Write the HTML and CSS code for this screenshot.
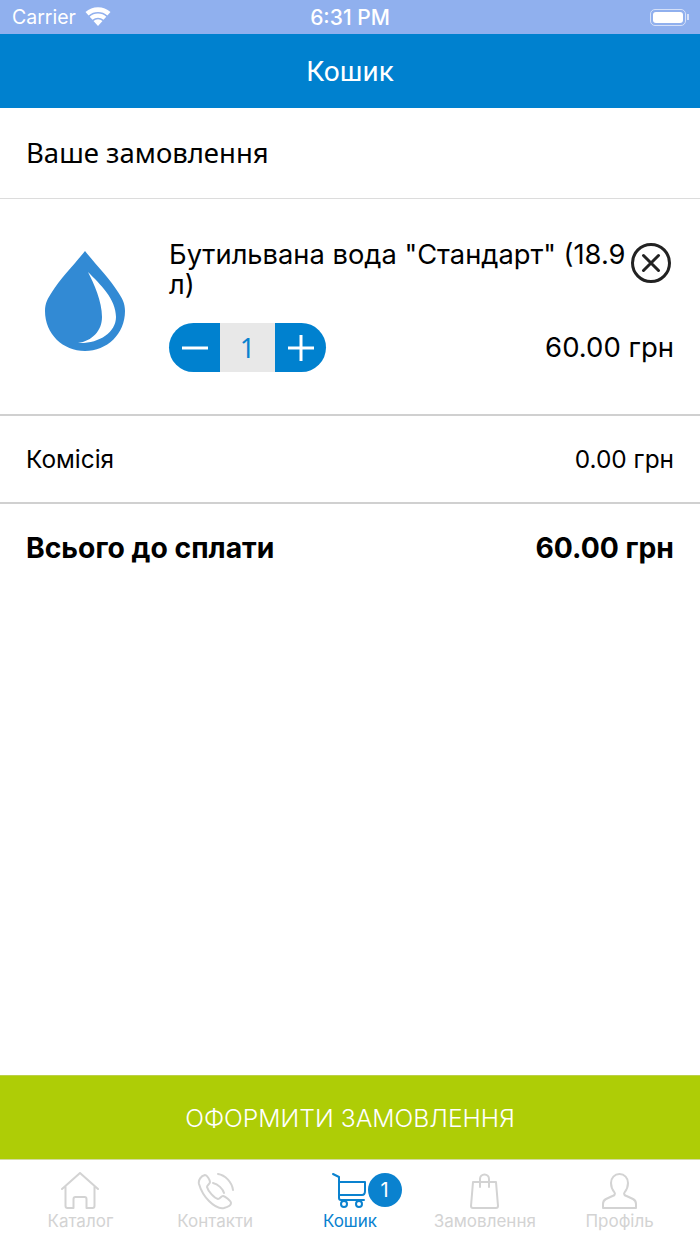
FILE: index.html
```html
<!DOCTYPE html>
<html lang="uk">
<head>
    <meta charset="UTF-8">
    <title>Кошик</title>
    <link rel="stylesheet" href="styles.css">
</head>
<body>
<div class="app">
    <div class="status">
        <div class="status-left">
            <span>Carrier</span>
            <svg class="wifi" width="26" height="20" viewBox="0 0 26 20"><path d="M13 19l-4.500-5a6.500 6.500 0 0 1 9 0zM7.500 12.800L4.700 9.700a12.500 12.500 0 0 1 16.600 0l-2.800 3.100a8.500 8.500 0 0 0-11 0zM3.600 8.500L0.500 5a18.500 18.500 0 0 1 25 0l-3.100 3.500a14.500 14.500 0 0 0-18.800 0z" fill="#fff"/></svg>
        </div>
        <div class="status-time">6:31 PM</div>
        <div class="status-right">
            <div class="battery"><div class="battery-fill"></div></div>
            <div class="battery-cap"></div>
        </div>
    </div>
    <div class="header">Кошик</div>
    <div class="content">
        <div class="title-row">Ваше замовлення</div>
        <div class="item">
            <svg class="drop" width="82" height="102" viewBox="0 0 82 102">
                <path d="M41 0C52 14 66 28 74 41c4 6 7 11 7 19 0 23-18 40-40 40S1 83 1 60c0-8 3-13 7-19C16 28 30 14 41 0z" fill="#328ad4"/>
                <path d="M44 21C56 33 72 48 72 66 72 82 54 93 34 92 48 90 58 80 58 66 58 50 50 33 44 21z" fill="#fff"/>
            </svg>
            <div class="item-main">
                <div class="item-name">Бутильвана вода "Стандарт" (18.9 л)</div>
                <div class="item-bottom">
                    <div class="stepper">
                        <div class="step step-minus"><svg width="26" height="26" viewBox="0 0 26 26"><path d="M0 13h26" stroke="#fff" stroke-width="3"/></svg></div>
                        <div class="step-value">1</div>
                        <div class="step step-plus"><svg width="26" height="26" viewBox="0 0 26 26"><path d="M0 13h26M13 0v26" stroke="#fff" stroke-width="3"/></svg></div>
                    </div>
                    <div class="item-price">60.00 грн</div>
                </div>
            </div>
            <svg class="remove" width="42" height="42" viewBox="0 0 42 42">
                <circle cx="21" cy="21" r="18.500" fill="none" stroke="#222" stroke-width="3"/>
                <path d="M13.500 13.500l15 15M28.500 13.500l-15 15" stroke="#222" stroke-width="3" stroke-linecap="round"/>
            </svg>
        </div>
        <div class="sum-row">
            <span>Комісія</span>
            <span>0.00 грн</span>
        </div>
        <div class="sum-row total">
            <span>Всього до сплати</span>
            <span>60.00 грн</span>
        </div>
    </div>
    <div class="order-btn">ОФОРМИТИ ЗАМОВЛЕННЯ</div>
    <div class="tabs">
        <div class="tab">
            <svg width="40" height="38" viewBox="0 0 40 38" fill="none" stroke="#d3d3d3" stroke-width="2" stroke-linecap="round" stroke-linejoin="round"><path d="M2 17L20 1l18 16M5.500 14v20a2 2 0 0 0 2 2h6v-9a2 2 0 0 1 2-2h9a2 2 0 0 1 2 2v9h6a2 2 0 0 0 2-2V14"/></svg>
            <span>Каталог</span>
        </div>
        <div class="tab">
            <svg width="40" height="38" viewBox="0 0 40 38" fill="none" stroke="#d3d3d3" stroke-width="2" stroke-linecap="round" stroke-linejoin="round"><path d="M10 3C6 4 3 8 4 12c2 7 5 12 10 17s10 8 15 7c4-1 7-3 7-5 0-2-6-7-8-7s-3 3-5 3c-4-1-10-8-11-12 0-2 3-3 3-5s-3-7-5-7zM18 11c5 1 10 6 11 10M23 2c7 1 14 8 15 16"/></svg>
            <span>Контакти</span>
        </div>
        <div class="tab tab-active">
            <svg width="40" height="38" viewBox="0 0 40 38" fill="none" stroke="#0a82cf" stroke-width="2" stroke-linecap="round" stroke-linejoin="round"><path d="M3 2l6 3v21q0 2 2 2h23M9 10h26v9q0 4-3 4H9"/><circle cx="14" cy="32" r="3"/><circle cx="29" cy="32" r="3"/></svg>
            <span>Кошик</span>
            <div class="badge">1</div>
        </div>
        <div class="tab">
            <svg width="40" height="38" viewBox="0 0 40 38" fill="none" stroke="#d3d3d3" stroke-width="2" stroke-linecap="round" stroke-linejoin="round"><path d="M8 10h23l2 24a2 2 0 0 1-2 2H8a2 2 0 0 1-2-2zM15 15V7a4.500 4.500 0 0 1 9 0v8"/></svg>
            <span>Замовлення</span>
        </div>
        <div class="tab">
            <svg width="40" height="38" viewBox="0 0 40 38" fill="none" stroke="#d3d3d3" stroke-width="2" stroke-linecap="round" stroke-linejoin="round"><path d="M19.500 2c-5 0-8.500 4-8.500 9 0 4 1.500 7 3.500 9.500 1 1.500 0 3-2 3.500L6 27c-2 1-3 3-3 5v4h33v-4c0-2-1-4-3-5l-6.500-3c-2-.5-3-2-2-3.500 2-2.500 3.500-5.500 3.500-9.500 0-5-3.500-9-8.500-9z"/></svg>
            <span>Профіль</span>
        </div>
    </div>
</div>
</body>
</html>
```
FILE: styles.css
```css
*{padding: 0;margin: 0;box-sizing: border-box;}
body{font-family: "Liberation Sans", "Noto Sans", sans-serif;background: #fff;color: #000;}
.app{width: 700px;height: 1244px;display: flex;flex-direction: column;overflow: hidden;}

.status{height: 34px;background: #90b0ee;color: #fff;display: flex;align-items: center;justify-content: space-between;padding: 0 11px 0 12px;font: 19.500px "Inter", sans-serif;position: relative;}
.status-left{display: flex;align-items: center;gap: 9px;}
.status-time{position: absolute;left: 0;right: 0;text-align: center;font-size: 21px;font-weight: 500;}
.status-right{display: flex;align-items: center;gap: 1px;}
.battery{width: 36px;height: 17px;border: 1px solid #d5e0f8;border-radius: 5px;padding: 2px;}
.battery-fill{height: 100%;background: #fff;border-radius: 3px;}
.battery-cap{width: 2px;height: 6px;background: #d5e0f8;}

.header{height: 74px;background: #0081cf;color: #fff;font: 28px "Roboto", sans-serif;display: flex;align-items: center;justify-content: center;}

.content{flex: 1;}
.title-row{height: 91px;padding: 0 0 2px 26px;display: flex;align-items: center;font: 27.500px "Noto Sans", sans-serif;border-bottom: 1px solid #dcdcdc;}

.item{height: 217px;padding: 41px 26px 0 26px;display: flex;position: relative;border-bottom: 2px solid #d0d0d0;}
.drop{margin: 11px 0 0 18px;flex: none;}
.item-main{margin-left: 43px;flex: 1;}
.item-name{width: 460px;font: 27.300px/30px "Inter", sans-serif;}
.item-bottom{display: flex;align-items: center;justify-content: space-between;margin-top: 23px;}
.item-price{font: 27.500px "Inter", sans-serif;padding-bottom: 2px;}
.remove{position: absolute;top: 43px;right: 28px;}

.stepper{display: flex;height: 49px;width: 157px;}
.step{width: 51px;background: #0081cf;display: flex;align-items: center;justify-content: center;}
.step-minus{border-radius: 25px 0 0 25px;}
.step-plus{border-radius: 0 25px 25px 0;}
.step-value{flex: 1;background: #e8e8e8;color: #0a82cf;font: 27px "Noto Sans", sans-serif;display: flex;align-items: center;justify-content: center;}

.sum-row{height: 88px;padding: 0 26px;display: flex;align-items: center;justify-content: space-between;font: 24.400px "Inter", sans-serif;border-bottom: 2px solid #d0d0d0;}
.total{height: 88px;font-size: 28.300px;font-weight: 700;border-bottom: 0;}

.order-btn{height: 85px;background: #aecd06;color: #fff;font: 300 24.700px "Inter", sans-serif;display: flex;align-items: center;justify-content: center;border-top: 1px solid #bcd048;border-bottom: 1px solid #d3dba0;}

.tabs{height: 84px;display: flex;padding: 12px 13px 0;}
.tab{flex: 1;display: flex;flex-direction: column;align-items: center;color: #d3d3d3;font: 17px "Inter", sans-serif;position: relative;}
.tab span{margin-top: 1px;}
.tab-active{color: #0a82cf;}
.badge{position: absolute;top: 1px;left: 85px;width: 34px;height: 34px;border-radius: 50%;background: #0a82cf;color: #fff;font: 20px "Inter", sans-serif;display: flex;align-items: center;justify-content: center;}
```
